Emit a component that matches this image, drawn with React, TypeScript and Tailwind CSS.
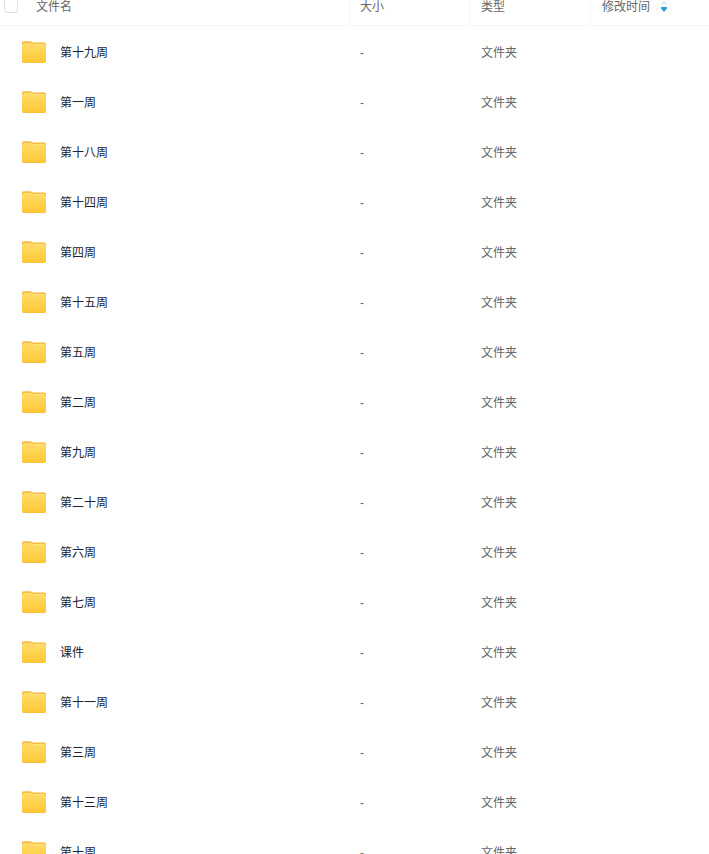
const folders = [
  "第十九周",
  "第一周",
  "第十八周",
  "第十四周",
  "第四周",
  "第十五周",
  "第五周",
  "第二周",
  "第九周",
  "第二十周",
  "第六周",
  "第七周",
  "课件",
  "第十一周",
  "第三周",
  "第十三周",
  "第十周",
]

function FolderIcon() {
  return (
    <svg width="24" height="22" viewBox="0 0 24 22" aria-hidden="true" className="shrink-0">
      <defs>
        <linearGradient id="folder" x1="0" y1="0" x2="0" y2="1">
          <stop offset="0" stopColor="#ffdc66" />
          <stop offset="1" stopColor="#fdc735" />
        </linearGradient>
      </defs>
      <path d="M0 2Q0 .3 1.5.3H8Q9 .3 10 1L11.5 1.5H22Q24 1.5 24 3.5V8H0Z" fill="#f8bc42" />
      <path d="M2 2.2H9L11 3H22V6H2Z" fill="#ffe9a0" />
      <path
        d="M0 4Q0 2.5 1.5 2.5H9.5Q10.5 2.5 11.2 3Q11.8 3.5 13 3.5H22.5Q24 3.5 24 5V20Q24 22 22 22H2Q0 22 0 20Z"
        fill="url(#folder)"
      />
      <path d="M.5 20.5Q1 21.6 2 21.6H22Q23 21.6 23.5 20.5" fill="none" stroke="#f7bd35" strokeWidth=".8" />
    </svg>
  )
}

function SortIcon() {
  return (
    <svg width="8" height="12" viewBox="0 0 8 12" aria-hidden="true">
      <path d="M4 0L7 3H1Z" fill="#cfeaf2" />
      <path d="M1 6H7V7.5L4 11L1 7.5Z" fill="#2c9fd9" />
    </svg>
  )
}

function FolderRow({ name }: { name: string }) {
  return (
    <tr className="h-[50px]">
      <td className="pt-0.5 pl-[22px]">
        <a href="#" className="flex items-center gap-[14px] text-[#1c2333]">
          <FolderIcon />
          <span className="pt-0.5">{name}</span>
        </a>
      </td>
      <td className="pt-1 pl-[10px]">-</td>
      <td className="pt-1 pl-[11px]">文件夹</td>
      <td />
    </tr>
  )
}

export default function App() {
  return (
    <main className="h-screen overflow-hidden bg-white font-['Liberation_Sans','Noto_Sans_CJK_SC',sans-serif] text-xs text-[#666]">
      <table className="w-full table-fixed border-separate border-spacing-0 text-left">
        <colgroup>
          <col />
          <col className="w-[120px]" />
          <col className="w-[121px]" />
          <col className="w-[118px]" />
        </colgroup>
        <thead>
          <tr className="h-[26px] align-top leading-[14px] *:border-b *:border-[#f6f6f6] *:font-normal">
            <th className="border-r pl-1">
              <div className="flex items-start gap-[18px]">
                <input
                  type="checkbox"
                  id="select-all"
                  aria-label="全选"
                  className="h-[13px] w-[14px] appearance-none rounded-b-[3px] border border-t-0 border-[#e0e0e0] bg-white"
                />
                <label htmlFor="select-all">文件名</label>
              </div>
            </th>
            <th className="border-r pl-[10px]">大小</th>
            <th className="border-r pl-[11px]">类型</th>
            <th className="pl-[11px]">
              <button type="button" className="flex items-center gap-[10px]">
                修改时间
                <SortIcon />
              </button>
            </th>
          </tr>
        </thead>
        <tbody>
          {folders.map((name) => (
            <FolderRow key={name} name={name} />
          ))}
        </tbody>
      </table>
    </main>
  )
}
